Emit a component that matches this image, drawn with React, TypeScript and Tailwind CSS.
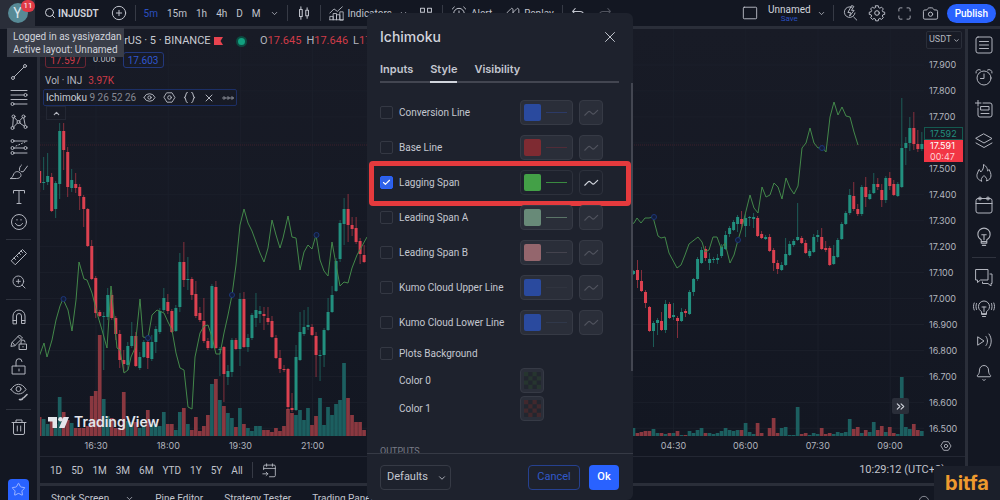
import { useState } from "react";
import type { ReactNode } from "react";
import {
  AlarmClock,
  Bell,
  Camera,
  Check,
  ChevronDown,
  ChevronsRight,
  ChevronUp,
  CirclePlus,
  Eye,
  Maximize,
  Rewind,
  Search,
  Star,
  X,
  ZoomIn,
} from "lucide-react";

// [up, high, body top, body bottom, low, volume]
type Candle = [number, number, number, number, number, number];

const leftCandles: Candle[] = [
  [0, 160, 171, 183, 192, 19], [1, 157, 182, 183, 190, 17], [1, 153, 176, 182, 185, 12], [0, 173, 177, 211, 212, 16],
  [1, 181, 183, 209, 218, 12], [1, 123, 131, 184, 199, 39], [0, 123, 131, 150, 170, 24], [0, 147, 152, 187, 197, 16],
  [1, 169, 180, 188, 192, 13], [0, 173, 184, 188, 193, 8], [0, 184, 187, 196, 210, 8], [0, 195, 197, 209, 227, 8],
  [0, 208, 209, 246, 247, 10], [0, 240, 246, 279, 280, 40], [0, 276, 278, 313, 318, 45], [0, 310, 312, 316, 317, 101],
  [1, 312, 316, 317, 370, 37], [1, 288, 295, 317, 320, 20], [0, 290, 295, 318, 320, 18], [0, 316, 318, 334, 340, 8],
  [0, 330, 334, 360, 368, 8], [0, 350, 360, 364, 372, 44], [1, 342, 346, 365, 370, 15], [1, 322, 336, 346, 348, 14],
  [0, 332, 336, 366, 367, 14], [1, 352, 357, 368, 370, 8], [1, 340, 342, 357, 358, 10], [0, 338, 342, 358, 369, 26],
  [1, 335, 342, 359, 361, 12], [1, 326, 329, 342, 353, 12], [1, 308, 311, 332, 334, 10], [1, 288, 298, 310, 312, 24],
  [0, 294, 302, 311, 314, 12], [0, 309, 311, 332, 333, 12], [1, 305, 308, 331, 332, 6], [1, 253, 262, 307, 312, 24],
  [0, 242, 262, 280, 287, 28], [1, 257, 279, 280, 290, 12], [0, 277, 279, 295, 300, 6], [0, 281, 294, 316, 318, 19],
  [0, 307, 313, 320, 322, 5], [0, 298, 321, 341, 343, 10], [0, 338, 341, 348, 350, 21], [1, 284, 286, 348, 349, 52],
  [0, 281, 287, 348, 349, 57], [1, 347, 349, 350, 376, 36], [0, 346, 347, 374, 402, 30], [1, 365, 371, 377, 385, 23],
  [1, 338, 340, 372, 377, 18], [0, 338, 340, 349, 350, 9], [1, 293, 299, 349, 366, 28], [0, 292, 299, 347, 348, 12],
  [1, 334, 338, 347, 352, 8], [1, 313, 315, 338, 340, 5], [1, 293, 310, 318, 327, 10], [1, 306, 311, 314, 323, 10],
  [0, 307, 314, 316, 330, 6], [0, 307, 318, 322, 325, 6], [0, 316, 321, 337, 338, 4], [0, 335, 338, 358, 359, 8],
  [0, 350, 358, 369, 373, 5], [0, 365, 369, 370, 372, 10], [0, 368, 369, 407, 410, 27], [0, 393, 408, 410, 412, 23],
  [1, 345, 357, 410, 411, 21], [1, 312, 332, 360, 361, 26], [1, 310, 327, 334, 336, 16], [1, 307, 325, 327, 330, 28],
  [0, 324, 327, 335, 336, 11], [0, 332, 336, 355, 377, 20], [1, 350, 355, 356, 381, 38], [1, 328, 330, 355, 367, 11],
  [1, 298, 312, 330, 331, 29], [1, 286, 295, 312, 313, 21], [1, 258, 261, 291, 292, 32], [1, 220, 223, 259, 262, 36],
  [1, 198, 209, 224, 245, 73], [0, 194, 209, 225, 242, 38], [0, 217, 225, 229, 236, 21], [0, 217, 228, 242, 244, 14],
  [0, 238, 241, 254, 264, 14], [0, 245, 255, 262, 263, 6],
];

const rightCandles: Candle[] = [
  [1, 270, 271, 274, 275, 8], [0, 260, 270, 280, 288, 3], [0, 270, 281, 291, 292, 4], [0, 290, 292, 303, 308, 5],
  [0, 306, 307, 331, 332, 5], [1, 321, 323, 331, 347, 7], [1, 318, 320, 323, 335, 3], [0, 312, 321, 330, 331, 3],
  [1, 300, 304, 330, 333, 2], [0, 302, 304, 318, 319, 3], [1, 303, 315, 317, 320, 3], [0, 316, 318, 321, 338, 5],
  [1, 308, 312, 321, 322, 1], [0, 309, 311, 313, 317, 1], [1, 290, 292, 314, 315, 5], [1, 278, 279, 292, 296, 3],
  [1, 257, 259, 279, 281, 6], [1, 247, 250, 263, 264, 8], [0, 246, 249, 258, 261, 3], [1, 253, 259, 263, 270, 3],
  [1, 257, 259, 260, 263, 2], [1, 254, 258, 260, 264, 3], [1, 244, 247, 256, 258, 5], [1, 231, 235, 249, 250, 8],
  [1, 226, 228, 234, 237, 6], [1, 220, 222, 230, 231, 5], [1, 215, 217, 224, 232, 6], [0, 211, 219, 224, 228, 6],
  [1, 214, 218, 226, 237, 13], [1, 216, 217, 218, 226, 4], [1, 213, 217, 219, 228, 2], [0, 216, 218, 236, 237, 13],
  [0, 231, 234, 238, 239, 3], [1, 235, 237, 239, 240, 0], [0, 234, 237, 251, 252, 8], [0, 248, 250, 263, 271, 18],
  [0, 260, 263, 269, 274, 3], [1, 262, 265, 270, 271, 8], [1, 238, 254, 265, 266, 9], [1, 241, 244, 255, 256, 1],
  [1, 239, 241, 245, 247, 1], [1, 203, 237, 240, 241, 29], [0, 236, 238, 243, 244, 2], [0, 240, 243, 253, 254, 3],
  [1, 249, 251, 256, 258, 1], [1, 234, 237, 252, 253, 3], [1, 230, 235, 237, 242, 2], [0, 228, 237, 249, 250, 8],
  [0, 241, 248, 250, 252, 2], [0, 246, 248, 265, 266, 3], [1, 245, 256, 264, 265, 2], [1, 238, 240, 257, 258, 4],
  [1, 222, 224, 239, 240, 3], [1, 211, 213, 224, 225, 4], [1, 189, 195, 213, 215, 17], [0, 182, 196, 209, 211, 7],
  [0, 204, 209, 214, 216, 9], [1, 185, 187, 214, 216, 3], [0, 177, 187, 197, 207, 6], [1, 190, 194, 199, 200, 4],
  [1, 173, 184, 193, 194, 14], [0, 178, 184, 187, 190, 6], [0, 184, 190, 200, 207, 10], [1, 176, 178, 200, 203, 4],
  [0, 172, 178, 186, 190, 9], [0, 180, 184, 195, 196, 3], [1, 182, 184, 196, 197, 2], [1, 98, 148, 187, 188, 59],
  [1, 137, 143, 148, 165, 9], [1, 117, 128, 143, 151, 7], [0, 112, 128, 144, 150, 12], [0, 130, 144, 149, 152, 6],
  [1, 132, 144, 149, 151, 5],
];

const lagLeft =
  "39,357 44,343 47,357 52,340 56,320 60,306 63,299 68,310 72,331 76,300 79,262 84,279 87,280 92,293 97,313 102,330 107,348 111,286 117,348 120,350 124,373 128,370 131,357 135,348 140,299 143,337 148,338 152,315 157,310 164,313 168,322 172,330 176,353 180,368 184,370 188,407 192,409 195,357 200,333 204,326 208,325 212,337 216,354 220,354 224,333 228,315 232,295 236,265 240,225 244,209 248,223 252,231 260,253 264,262 268,248 272,220 276,235 280,248 283,238 288,216 292,237 296,238 300,270 304,252 308,245 312,249 316,235 320,260 324,271 328,276 332,242 337,270 340,286 344,282 348,283 352,268 357,255 367,237";
const lagRight =
  "630,225 634,223 637,218 641,223 645,218 649,218 653,217 658,236 661,238 665,237 669,253 677,268 681,265 685,255 689,244 698,237 702,242 705,252 709,250 713,237 717,237 721,248 725,243 730,263 734,255 738,240 742,227 750,195 754,208 758,213 762,187 766,197 770,195 774,183 778,187 782,199 786,178 790,188 794,194 798,186 802,148 806,143 810,128 814,143 818,148 822,147 826,152 830,117 834,102 838,115 842,107 846,116 850,117 854,132 858,145";
const lagDots = [[63.5, 299], [148, 338], [232, 295], [316.5, 235], [654, 217], [738, 240], [822, 148]];

const prices = ["17.900", "17.800", "17.700", "", "17.500", "17.400", "17.300", "17.200", "17.100", "17.000", "16.900", "16.800", "16.700", "16.600", "16.500"];
const times = ["16:30", "18:00", "19:30", "21:00", "", "", "", "", "04:30", "06:00", "07:30", "09:00"];

const plots = [
  { name: "Conversion Line", swatch: "bg-[#2a4a9e]", line: "bg-[#2c3a66]" },
  { name: "Base Line", swatch: "bg-[#7e2b32]", line: "bg-[#512c38]" },
  { name: "Lagging Span", swatch: "bg-[#43a047]", line: "bg-[#3a8a40]", on: true },
  { name: "Leading Span A", swatch: "bg-[#688a78]", line: "bg-[#5b7568]" },
  { name: "Leading Span B", swatch: "bg-[#94666d]", line: "bg-[#44434e]" },
  { name: "Kumo Cloud Upper Line", swatch: "bg-[#2a4a9e]", line: "bg-[#30343f]" },
  { name: "Kumo Cloud Lower Line", swatch: "bg-[#2a4a9e]", line: "bg-[#30384a]" },
];

function Svg({ children, size = 18 }: { children: ReactNode; size?: number }) {
  return (
    <svg width={size} height={size} viewBox="0 0 18 18" fill="none" stroke="currentColor" strokeWidth={1} strokeLinecap="round" strokeLinejoin="round" className="shrink-0">
      {children}
    </svg>
  );
}

function IconButton({ label, className = "", children }: { label: string; className?: string; children: ReactNode }) {
  return (
    <button aria-label={label} className={`flex shrink-0 items-center justify-center ${className}`}>
      {children}
    </button>
  );
}

function Gear() {
  return (
    <Svg>
      <path d="M7.600 1.800h2.800l.4 2 1.300.6 1.800-1.100 1.900 1.900-1.100 1.800.6 1.300 2 .4v2.400l-2 .4-.6 1.300 1.100 1.800-1.900 1.900-1.800-1.100-1.300.6-.4 2H7.600l-.4-2-1.300-.6-1.800 1.100-1.900-1.900 1.100-1.800-.6-1.300-2-.4V8.700l2-.4.6-1.300-1.100-1.800 1.900-1.900 1.800 1.100 1.300-.6z" transform="translate(.6 .1) scale(.93)" />
      <circle cx="9" cy="9" r="2.300" />
    </Svg>
  );
}

function HexGear({ size = 14 }: { size?: number }) {
  return (
    <Svg size={size}>
      <path d="M5.500 2.500h7L16.500 9l-4 6.500h-7L1.500 9z" strokeWidth={1.300} />
      <circle cx="9" cy="9" r="2.500" strokeWidth={1.300} />
    </Svg>
  );
}

function Bulb() {
  return (
    <>
      <path d="M6.500 13v-1.500C4.800 10.500 3.500 9 3.500 6.500a5.500 5.500 0 0 1 11 0c0 2.500-1.300 4-3 5V13zM6.500 13v1.500h5V13M7.500 16.500h3M9 11.500V7M7 7h4" />
    </>
  );
}

function Divider() {
  return <div className="h-4 w-px shrink-0 bg-[#363a45]" />;
}

function Header() {
  return (
    <header className="flex h-[29px] shrink-0 items-center border-b-[3px] border-[#2a2e39] text-[#c1c4cd]">
      <button aria-label="Account" className="relative flex h-full w-[35px] shrink-0 items-center justify-center bg-[#2a2e39]">
        <span className="flex h-5 w-5 items-center justify-center rounded-full bg-[#578a96] text-sm text-[#dfe6ea]">Y</span>
        <span className="absolute top-0 right-0 flex h-3 w-[14px] items-center justify-center rounded-full bg-[#e03a46] text-[8px] text-white">11</span>
      </button>
      <div className="flex items-center pl-[9px]">
        <button className="flex items-center gap-[2px] font-semibold text-[#d1d4dc]">
          <Search size={12} strokeWidth={2} />
          INJUSDT
        </button>
        <IconButton label="Compare symbols" className="mr-2 ml-3">
          <CirclePlus size={16} strokeWidth={1.500} />
        </IconButton>
        <Divider />
        <nav className="flex items-center gap-[9px] px-[8px]">
          <button className="text-[#2b50c0]">5m</button>
          <button>15m</button>
          <button>1h</button>
          <button>4h</button>
          <button>D</button>
          <button>M</button>
          <IconButton label="More intervals">
            <ChevronDown size={9} />
          </IconButton>
        </nav>
        <Divider />
        <IconButton label="Candles" className="w-8">
          <Svg size={16}>
            <path d="M4 5h3v8H4zM5.500 2v3M5.500 13v3M11 6h3v6h-3zM12.500 3v3M12.500 12v3" strokeWidth={1.200} />
          </Svg>
        </IconButton>
        <Divider />
        <button className="flex items-center gap-1 pl-2">
          <Svg size={15}>
            <path d="M1 16.500v-4h4v4M5 16.500V9h4v7.500M9 16.500v-6h4v6M13 16.500V7h4v9.500zM1 16.500h16M1 8.500l5-5 4 3L16 1" />
          </Svg>
          Indicators
        </button>
        <IconButton label="Favorite indicators" className="w-6">
          <ChevronDown size={9} />
        </IconButton>
        <IconButton label="Templates" className="w-5">
          <Svg size={14}>
            <path d="M2 3h5v5H2zM11 3h5v5h-5zM2 12h5v5H2zM11 12h5v5h-5z" strokeWidth={1.300} />
          </Svg>
        </IconButton>
        <div className="w-[6px]" />
        <Divider />
        <button className="flex items-center gap-1 px-2">
          <AlarmClock size={16} strokeWidth={1.500} />
          Alert
        </button>
        <button className="flex items-center gap-1 pr-2 pl-[6px]">
          <Rewind size={14} strokeWidth={1.500} />
          Replay
        </button>
        <Divider />
        <IconButton label="Undo" className="w-8">
          <Svg size={15}>
            <path d="M5 3L2 6.500 5 10M2 6.500h9a4 4 0 0 1 0 8" strokeWidth={1.300} />
          </Svg>
        </IconButton>
        <IconButton label="Redo" className="w-5 text-[#50535e]">
          <Svg size={15}>
            <path d="M13 3l3 3.500-3 3.500M16 6.500H7a4 4 0 0 0 0 8" strokeWidth={1.300} />
          </Svg>
        </IconButton>
      </div>
      <div className="ml-auto flex items-center pr-1">
        <IconButton label="Layout" className="mr-[10px]">
          <Svg size={16}>
            <rect x="1.500" y="2.500" width="15" height="13" rx="1" />
          </Svg>
        </IconButton>
        <button className="flex flex-col items-center leading-[11px]">
          <span className="text-[#d1d4dc]">Unnamed</span>
          <span className="text-[8px] leading-[8px] text-[#2b50c0]">Save</span>
        </button>
        <IconButton label="Manage layouts" className="w-[22px]">
          <ChevronDown size={9} />
        </IconButton>
        <Divider />
        <IconButton label="Quick search" className="ml-1 w-[26px]">
          <Svg size={16}>
            <path d="M10 2.500a6 6 0 1 0 3.500 6.500M12 13.500l3.500 3.500M9.500 1L5.500 8.500h3l-1 4 5-6.500h-3l2.500-4z" />
          </Svg>
        </IconButton>
        <IconButton label="Settings" className="w-[27px]">
          <Gear />
        </IconButton>
        <IconButton label="Fullscreen" className="w-[27px]">
          <Maximize size={15} strokeWidth={1.300} />
        </IconButton>
        <IconButton label="Snapshot" className="mr-[3px] w-[26px]">
          <Camera size={17} strokeWidth={1.300} />
        </IconButton>
        <button className="h-[19px] rounded-full bg-[#2962ff] px-2 font-medium text-white">Publish</button>
      </div>
    </header>
  );
}

function ToolDivider() {
  return (
    <div className="flex h-[10px] w-full shrink-0 items-center px-[6px]">
      <div className="h-px w-full bg-[#2f333e]" />
    </div>
  );
}

function Tool({ label, children }: { label: string; children: ReactNode }) {
  return (
    <IconButton label={label} className="h-[25px] w-full">
      <Svg>{children}</Svg>
    </IconButton>
  );
}

function LeftTools() {
  return (
    <aside className="flex w-10 shrink-0 flex-col items-center border-r-[3px] border-[#2a2e39] pt-[5px] text-[#b2b5be]">
      <Tool label="Cursor"><path d="M9 2v5M9 11v5M2 9h5M11 9h5" /></Tool>
      <Tool label="Trend line">
        <circle cx="3" cy="15" r="1.500" /><circle cx="15" cy="3" r="1.500" /><path d="M4.200 13.800l9.600-9.600" />
      </Tool>
      <Tool label="Fib retracement">
        <path d="M1 2.500h16M1 7h13M1 11.500h16M4 16h13" /><circle cx="15.500" cy="7" r="1.500" /><circle cx="2.500" cy="16" r="1.500" />
      </Tool>
      <Tool label="Patterns">
        <circle cx="3.500" cy="3.500" r="1.500" /><circle cx="13.500" cy="3.500" r="1.500" /><circle cx="8.500" cy="9" r="1.500" /><circle cx="2.500" cy="15" r="1.500" /><circle cx="15.500" cy="14" r="1.500" />
        <path d="M3.300 5l-.6 8.500M4.500 4.700l3 3.200M9.500 7.900l3-3.200M7.400 10l-3.800 4M9.700 10l4.600 3.200M13.800 5l1.400 7.500" />
      </Tool>
      <Tool label="Forecasting">
        <circle cx="2.500" cy="3" r="1.500" /><circle cx="2.500" cy="10" r="1.500" /><circle cx="15.500" cy="10" r="1.500" /><circle cx="2.500" cy="15" r="1.500" />
        <path d="M4 3h13M4 10h10M4 15h13" /><path d="M6 8l9-4" strokeDasharray="1 2" />
      </Tool>
      <Tool label="Brush">
        <path d="M.5 15.500c2-.5 2.500-3 3.500-5 1.500-2.500 5-2.500 6.500 0s-.5 5-3.500 5zM9.500 7.500c-.5-2 .5-4.500 2-5.500M11 8.500c1.500 1 3 0 3.500-1.500l3-4" />
      </Tool>
      <Tool label="Text"><path d="M3.500 5V2.500h11V5M9 2.500v13M7 15.500h4" /></Tool>
      <Tool label="Icons">
        <circle cx="9" cy="9" r="7.500" /><path d="M5.500 10.500c1.500 3 5.500 3 7 0M7 6.500v.6M11 6.500v.6" />
      </Tool>
      <ToolDivider />
      <Tool label="Measure"><path d="M1.500 12.500l11-11 4 4-11 11zM4 10l1.500 1.500M6.500 7.500L8 9M9 5l1.500 1.500M11 3l1.500 1.500" /></Tool>
      <IconButton label="Zoom in" className="h-[25px] w-full"><ZoomIn size={16} strokeWidth={1.400} /></IconButton>
      <ToolDivider />
      <Tool label="Magnet">
        <path d="M3 15.500V8a6 6 0 0 1 12 0v7.500h-3.500V8a2.500 2.500 0 0 0-5 0v7.500zM3 12.500h3.500M11.500 12.500H15" />
      </Tool>
      <Tool label="Lock drawing mode">
        <path d="M1 13l1-3.500L9.500 2l3 3L5 12.500zM8 3.500l3 3M2.500 9.500l2.500 3M9.500 11h7v5.500h-7zM11 11V9a2 2 0 0 1 4 0M13 13.500v.5" />
      </Tool>
      <Tool label="Lock drawings"><path d="M2.500 8h12.500v8H2.500zM6 8V4a3 3 0 0 1 6-.5M9 11v2" /></Tool>
      <Tool label="Hide drawings">
        <path d="M1 6.500c4-7 11-7 15 0-4 6-11 6-15 0z" /><circle cx="8.500" cy="6" r="2.500" /><path d="M9.500 16.500c2 .5 3 0 3.500-1.500M14 14.500l3-3" strokeWidth={1.600} />
      </Tool>
      <ToolDivider />
      <Tool label="Remove"><path d="M2 4.500h14M6 4.500V2h6v2.500M3.500 4.500V15a1.500 1.500 0 0 0 1.500 1.500h8a1.500 1.500 0 0 0 1.500-1.500V4.500M7.300 8v5M10.700 8v5" /></Tool>
      <IconButton label="Favorites" className="mt-auto h-[21px] w-[21px] rounded-t-sm bg-[#2962ff] text-[#b7c8ff]">
        <Star size={15} strokeWidth={1.300} />
      </IconButton>
    </aside>
  );
}

function RightTools() {
  const cell = "h-8 w-full";
  return (
    <aside className="flex w-[35px] shrink-0 flex-col items-center border-l-[3px] border-[#2a2e39] text-[#b2b5be]">
      <IconButton label="Watchlist" className={cell}>
        <Svg><rect x="1" y="1" width="16" height="16" rx="2" /><path d="M4.500 5.500h9M4.500 9h9M4.500 12.500h9" /></Svg>
      </IconButton>
      <IconButton label="Alerts" className={cell}>
        <Svg><circle cx="9" cy="10" r="7" /><path d="M9 6v4.500H5.500M1 5a3 3 0 0 1 4.500-3M17 5a3 3 0 0 0-4.500-3" /></Svg>
      </IconButton>
      <IconButton label="Data window" className={cell}>
        <Svg><path d="M8 3h7a2 2 0 0 1 2 2v10a2 2 0 0 1-2 2H5a2 2 0 0 1-2-2V8M3 0v6M0 3h6M6 13.500h8M6 6.500h8v3.500H6z" /></Svg>
      </IconButton>
      <IconButton label="Hotlists" className={cell}>
        <Svg><path d="M9 2l8 4.500L9 11 1 6.500zM1 11l8 4.500 8-4.500" /></Svg>
      </IconButton>
      <IconButton label="Trending" className={cell}>
        <Svg><path d="M6.500 17C3 16 1.500 13.500 2 10.500c.3-2 1.500-3 2-5 1 .5 1.500 1.500 1.700 2.500C7.500 6.500 9 4 8.500.5c3.500 2 4 4.500 4 6.500.8-.3 1.200-1 1.500-1.500 2.500 4 3.500 9.500-2.500 11.500 1-2-.5-3.500-2.500-5.500-2 2-3.500 3.500-2.500 5.500z" /></Svg>
      </IconButton>
      <IconButton label="Calendar" className={cell}>
        <Svg><rect x="1" y="2.500" width="16" height="14.500" rx="2" /><path d="M1 7.500h16M6.500 2.500h5" /><circle cx="5" cy="2.500" r="1.500" /><circle cx="13" cy="2.500" r="1.500" /></Svg>
      </IconButton>
      <IconButton label="My ideas" className={cell}><Svg size={20}><Bulb /></Svg></IconButton>
      <div className="flex h-2 w-full items-center px-1"><div className="h-px w-full bg-[#2f333e]" /></div>
      <IconButton label="Public chats" className={cell}>
        <Svg><path d="M1 1.500h12V12H5.500L2.500 14.500V12H1zM15 6h2v9.500h-1V18l-3-2.500H7.500V14" /></Svg>
      </IconButton>
      <IconButton label="Ideas stream" className={cell}>
        <svg width="22" height="18" viewBox="-2 0 22 18" fill="none" stroke="currentColor" strokeLinecap="round">
          <Bulb />
          <path d="M1.500 3.500c-.7 2-.7 4 0 6M-.8 3c-1 2.300-1 4.700 0 7M16.500 3.500c.7 2 .7 4 0 6M18.800 3c1 2.300 1 4.700 0 7" />
        </svg>
      </IconButton>
      <IconButton label="Streams" className={cell}>
        <Svg><path d="M3 5l6 4-6 4zM11 4.500c2 2.500 2 6.500 0 9M14 2c3 4 3 10 0 14" /></Svg>
      </IconButton>
      <IconButton label="Notifications" className={cell}><Bell size={18} strokeWidth={1.300} /></IconButton>
    </aside>
  );
}

function Candles({ data, start }: { data: Candle[]; start: number }) {
  return (
    <g>
      {data.map(([up, high, top, bottom, low, volume], i) => {
        const x = start + i * 4.005;
        return (
          <g key={i} fill={up ? "#22907f" : "#dc4150"}>
            <rect x={x - 1.900} y={436 - volume} width="3.700" height={volume} fill={up ? "#1c5f60" : "#8a3840"} />
            <rect x={x - 0.400} y={high} width="0.800" height={low - high} opacity="0.700" />
            <rect x={x - 1.500} y={top} width="3" height={Math.max(bottom - top, 1)} />
          </g>
        );
      })}
    </g>
  );
}

function Plot() {
  return (
    <svg viewBox="40 29 884 407" preserveAspectRatio="none" className="absolute inset-0 h-full w-full">
      {prices.map((_, i) => (
        <path key={i} d={`M40 ${65 + i * 25.950}h884`} stroke="#1b1f2a" />
      ))}
      {times.map((_, i) => (
        <path key={i} d={`M${96 + i * 72.200} 29v407`} stroke="#1b1f2a" />
      ))}
      <path d="M40 145h884" stroke="#3c212c" strokeDasharray="1 1" />
      <Candles data={leftCandles} start={39.700} />
      <Candles data={rightCandles} start={633.500} />
      <g fill="none" stroke="#43884a">
        <polyline points={lagLeft} />
        <polyline points={lagRight} />
      </g>
      {lagDots.map(([x, y]) => (
        <circle key={x} cx={x} cy={y} r="2.500" fill="#131c38" stroke="#1c3678" />
      ))}
    </svg>
  );
}

function Legend() {
  return (
    <div className="absolute top-[5px] left-[3px] flex flex-col items-start text-[#b2b5be]">
      <div className="flex h-[14px] items-center text-[11px]">
        <span className="w-[162px] text-right whitespace-nowrap text-[#c8cbd3]">INJUSDT / TetherUS · 5 · BINANCE</span>
        <svg width="9" height="8" viewBox="0 0 9 8" className="ml-[9px]"><path d="M0 0h9L6.500 4 9 8H0z" fill="#e8434f" /></svg>
        <span className="mx-[13px] h-[11px] w-[11px] rounded-full border-2 border-[#0c4a40] bg-[#12a07f]" />
        <div className="flex gap-[5px]">
          {[["O", "17.645"], ["H", "17.646"], ["L", "17.590"]].map(([key, value]) => (
            <span key={key}>{key}<span className="text-[#cf3b48]">{value}</span></span>
          ))}
        </div>
      </div>
      <div className="mt-1 flex h-4 items-center gap-[7px] pl-[2px]">
        <button className="h-full w-[41px] rounded-[3px] border border-[#6d2633] text-[#cf3b48]">17.597</button>
        <span className="text-[9px]">0.006</span>
        <button className="h-full w-[41px] rounded-[3px] border border-[#22387c] text-[#2f57cf]">17.603</button>
      </div>
      <div className="mt-[5px] flex h-[14px] items-center gap-[6px] pl-[2px]">
        Vol · INJ <span className="text-[#cf3b48]">3.97K</span>
      </div>
      <div className="mt-[2px] flex h-[17px] items-center gap-[7px] rounded-[2px] border border-[#1c2f66] px-[2px]">
        <span className="text-[#c8cbd3]">Ichimoku <span className="text-[#868993]">9 26 52 26</span></span>
        <IconButton label="Hide"><Eye size={13} strokeWidth={1.800} /></IconButton>
        <IconButton label="Indicator settings"><HexGear size={13} /></IconButton>
        <IconButton label="Source code">
          <Svg size={13}><path d="M6 2C3 2 5 8 2 9c3 1 1 7 4 7M12 2c3 0 1 6 4 7-3 1-1 7-4 7" strokeWidth={1.500} /></Svg>
        </IconButton>
        <IconButton label="Remove indicator"><X size={12} strokeWidth={2} /></IconButton>
        <IconButton label="More">
          <Svg size={12}><circle cx="3" cy="9" r="1.800" /><circle cx="9" cy="9" r="1.800" /><circle cx="15" cy="9" r="1.800" /></Svg>
        </IconButton>
      </div>
      <IconButton label="Collapse legend" className="ml-[3px] h-[14px] w-5 border border-[#232733]">
        <ChevronUp size={9} strokeWidth={3} />
      </IconButton>
    </div>
  );
}

function Chart() {
  return (
    <main className="flex min-w-0 flex-1 flex-col">
      <div className="flex min-h-0 flex-1 bg-gradient-to-b from-[#181b26] to-[#131722]">
        <div className="relative min-w-0 flex-1">
          <Plot />
          <Legend />
          <div className="absolute bottom-[6px] left-2 flex items-center gap-[5px] text-[#e4e6eb]">
            <svg width="21" height="11" viewBox="0 0 21 11" fill="currentColor">
              <path d="M0 0h9v11H4.500V4.500H0zM15.500 0H21l-4.500 11H11z" /><circle cx="12.500" cy="2.300" r="2.300" />
            </svg>
            <span className="font-['Inter',sans-serif] text-sm leading-4 font-semibold">TradingView</span>
          </div>
          <IconButton label="Scroll to latest bar" className="absolute right-[15px] bottom-[22px] h-4 w-[17px] rounded-[2px] bg-[#2a2e39] text-[#d1d4dc]">
            <ChevronsRight size={13} />
          </IconButton>
        </div>
        <div className="relative flex w-[41px] shrink-0 flex-col overflow-hidden pt-[2px] font-['Inter',sans-serif] text-[9px] text-[#b2b5be]">
          <div className="relative mb-[3px] ml-[2px] h-[18px] w-9 shrink-0 font-['Roboto',sans-serif]">
            <select aria-label="Currency" className="h-full w-full appearance-none rounded-[2px] border border-[#2a2e39] pl-[2px]">
              <option>USDT</option>
            </select>
            <ChevronDown size={7} strokeWidth={3} className="pointer-events-none absolute top-[6px] right-[2px]" />
          </div>
          {prices.map((price, i) => (
            <div key={i} className="flex h-[26px] shrink-0 items-center pl-[5px]">{price}</div>
          ))}
          <div className="absolute top-[98px] left-0 w-[39px]">
            <div className="h-[13px] border border-[#14594f] pl-[5px] leading-[11px] text-[#22907f]">17.592</div>
            <div className="h-[22px] bg-[#f23645] pl-[6px] leading-[11px] text-white">
              17.591<br /><span className="text-[#ffd0d4]">00:47</span>
            </div>
          </div>
        </div>
      </div>
      <div className="flex h-5 shrink-0 items-center font-['Inter',sans-serif] text-[9px] text-[#b2b5be]">
        <div className="flex min-w-0 flex-1 pl-5">
          {times.map((time, i) => (
            <div key={i} className="flex-1 text-center">{time}</div>
          ))}
        </div>
        <IconButton label="Axis settings" className="w-[39px]"><HexGear size={12} /></IconButton>
      </div>
      <div className="flex h-[27px] shrink-0 items-center gap-[9px] border-t border-[#232733] pr-5 pl-[10px] text-[#c1c4cd]">
        {["1D", "5D", "1M", "3M", "6M", "YTD", "1Y", "5Y", "All"].map((range) => (
          <button key={range}>{range}</button>
        ))}
        <Divider />
        <IconButton label="Go to date">
          <Svg size={15}><path d="M2 8V4a1.500 1.500 0 0 1 1.500-1.500h11A1.500 1.500 0 0 1 16 4v11a1.500 1.500 0 0 1-1.500 1.500H9M2 6.500h14M5.500 1v3M12.500 1v3M1 13h6M5 11l2 2-2 2" /></Svg>
        </IconButton>
        <span className="ml-auto text-[11px] whitespace-nowrap">10:29:12 (UTC+3)</span>
      </div>
      <div className="flex h-[17px] shrink-0 items-start gap-[21px] overflow-hidden border-t-[3px] border-[#2a2e39] px-[11px] pt-[5px] whitespace-nowrap text-[#c1c4cd]">
        <button className="flex items-center gap-4">Stock Screen <ChevronDown size={9} /></button>
        <button>Pine Editor</button>
        <button>Strategy Tester</button>
        <button>Trading Panel</button>
        <IconButton label="Panel options" className="mr-6 ml-auto pt-1"><Svg size={12}><circle cx="9" cy="9" r="7" /></Svg></IconButton>
      </div>
    </main>
  );
}

function StyleRow({ plot }: { plot: (typeof plots)[number] }) {
  const box = plot.on ? "border-[#2d313c]" : "border-[#363a45] bg-[#2a2e39]";
  return (
    <div className="relative flex h-[35px] items-center">
      <CheckLabel name={plot.name} on={plot.on} />
      <button aria-label={`${plot.name} color`} className={`ml-auto flex h-[25px] w-[53px] shrink-0 items-center gap-[5px] rounded border px-[3px] ${box}`}>
        <span className={`h-[17px] w-[17px] rounded-[2px] ${plot.swatch}`} />
        <span className={`h-px w-[21px] ${plot.line}`} />
      </button>
      <IconButton label={`${plot.name} plot style`} className={`ml-[6px] h-[25px] w-6 rounded border ${box} ${plot.on ? "text-[#d1d4dc]" : "text-[#50535e]"}`}>
        <Svg size={16}><path d="M2 11.500l3.500-3.500c1-1 2-1 3 0l1.500 1.500c1 1 2 1 3 0L16.500 6" strokeWidth={1.300} /></Svg>
      </IconButton>
      {plot.on && <div className="pointer-events-none absolute -top-[4px] -right-[28px] -left-[11px] h-[45px] rounded border-[5px] border-[#e53a3d]" />}
    </div>
  );
}

function CheckLabel({ name, on = false }: { name: string; on?: boolean }) {
  return (
    <label className="flex items-center gap-[6px] whitespace-nowrap">
      <span className="relative h-[13px] w-[13px]">
        <input type="checkbox" defaultChecked={on} className="peer block h-[13px] w-[13px] appearance-none rounded-[2px] border border-[#343843] checked:border-[#2962ff] checked:bg-[#2f62e8]" />
        <Check size={9} strokeWidth={3} className="pointer-events-none absolute top-[2px] left-[2px] hidden text-white peer-checked:block" />
      </span>
      {name}
    </label>
  );
}

function IchimokuDialog({ onClose }: { onClose: () => void }) {
  const [tab, setTab] = useState("Style");

  return (
    <div role="dialog" aria-label="Ichimoku" className="absolute top-[13px] bottom-0 left-1/2 flex w-[266px] -translate-x-1/2 flex-col rounded-md bg-[#1e222d] text-[#c4c7d0]">
      <div className="flex h-12 shrink-0 items-center justify-between pr-[14px] pl-[13px] font-['Inter',sans-serif]">
        <h2 className="text-sm font-medium text-[#d1d4dc]">Ichimoku</h2>
        <button aria-label="Close" onClick={onClose}><X size={18} strokeWidth={1.300} /></button>
      </div>
      <div className="mr-[14px] ml-[13px] flex h-[22px] shrink-0 gap-[17px] border-b-2 border-[#434651] font-['Inter',sans-serif] text-[11px] font-semibold">
        {["Inputs", "Style", "Visibility"].map((name) => (
          <button
            key={name}
            onClick={() => setTab(name)}
            className={`-mb-[2px] border-b-2 pb-[3px] ${tab === name ? "border-[#d1d4dc]" : "border-transparent"}`}
          >
            {name}
          </button>
        ))}
      </div>
      <div className="relative min-h-0 flex-1 overflow-hidden pt-3 pr-[30px] pl-[13px]">
        {plots.map((plot) => (
          <StyleRow key={plot.name} plot={plot} />
        ))}
        <div className="flex h-[26px] items-center"><CheckLabel name="Plots Background" /></div>
        {[["Color 0", "text-[#26352f]"], ["Color 1", "text-[#41282d]"]].map(([name, tint]) => (
          <div key={name} className="flex h-7 items-center pl-[19px]">
            <span className="w-[121px]">{name}</span>
            <button aria-label={name} className={`flex h-[25px] w-6 items-center justify-center rounded border border-[#363a45] bg-[#2a2e39] ${tint}`}>
              <svg width="17" height="17" viewBox="0 0 16 16">
                <rect width="16" height="16" rx="1" fill="#22262f" />
                <path d="M0 0h4v4H0zM8 0h4v4H8zM4 4h4v4H4zM12 4h4v4h-4zM0 8h4v4H0zM8 8h4v4H8zM4 12h4v4H4zM12 12h4v4h-4z" fill="currentColor" />
              </svg>
            </button>
          </div>
        ))}
        <div className="mt-[23px] text-[9px] text-[#787b86]">OUTPUTS</div>
        <div className="absolute top-0 right-0 h-72 w-[2px] bg-[#434651]" />
      </div>
      <div className="flex h-[47px] shrink-0 items-center gap-[9px] border-t border-[#363a45] pr-[14px] pl-[13px] text-[11px]">
        <div className="relative mr-auto h-[25px] w-[71px]">
          <select aria-label="Defaults" className="h-full w-full appearance-none rounded border border-[#363a45] pl-[6px]">
            <option>Defaults</option>
          </select>
          <ChevronDown size={10} className="pointer-events-none absolute top-2 right-1" />
        </div>
        <button onClick={onClose} className="h-[25px] w-[52px] rounded border border-[#26418f] text-[#3159c9]">Cancel</button>
        <button onClick={onClose} className="h-[25px] w-[30px] rounded bg-[#2962ff] font-medium text-white">Ok</button>
      </div>
    </div>
  );
}

export default function App() {
  const [open, setOpen] = useState(true);

  return (
    <div className="relative flex h-screen flex-col overflow-hidden bg-[#131722] font-['Roboto',sans-serif] text-[10px]">
      <Header />
      <div className="flex min-h-0 flex-1">
        <LeftTools />
        <Chart />
        <RightTools />
      </div>
      <div role="tooltip" className="absolute top-7 left-[7px] w-[117px] bg-[#3a3e49] px-[6px] pt-[2px] pb-px leading-[13px] whitespace-nowrap text-[#d1d4dc]">
        Logged in as yasiyazdan
        <br />
        Active layout: Unnamed
      </div>
      <div className="absolute right-0 bottom-0 flex h-[34px] w-[66px] items-center justify-center bg-[#1b1f2a] font-['Inter',sans-serif] text-xl leading-5 font-bold text-[#ee9a2e]">
        bitfa
      </div>
      {open && <IchimokuDialog onClose={() => setOpen(false)} />}
    </div>
  );
}
